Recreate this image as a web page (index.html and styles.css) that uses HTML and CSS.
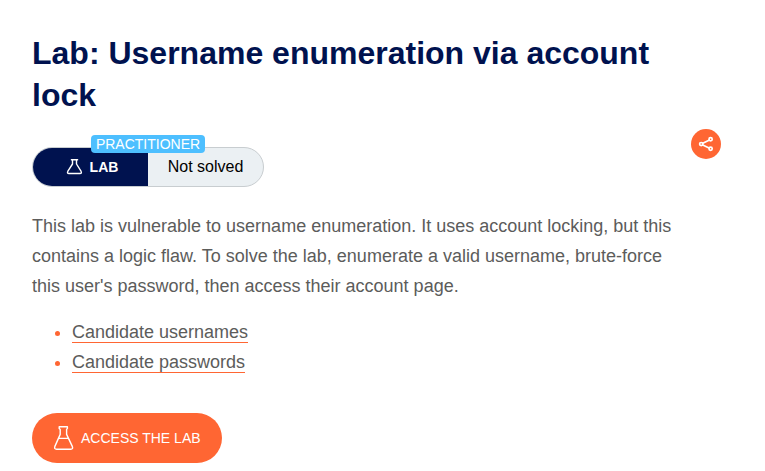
FILE: index.html
```html
<!DOCTYPE html>
<html lang="en">
<head>
<meta charset="utf-8">
<title>Lab: Username enumeration via account lock</title>
<link rel="stylesheet" href="styles.css">
</head>
<body>
<main class="page">
  <h1 class="title">Lab: Username enumeration via account lock</h1>
  <div class="status-row">
    <div class="lab-status">
      <span class="level">PRACTITIONER</span>
      <div class="lab-label">
        <svg class="flask-small" viewBox="0 0 16 16"><path d="M4.4 .8h6.2M5.5 1v4L.9 12.2Q-.3 14.5 2 14.5h10.9Q15.2 14.5 14 12.2L9.5 5V1"/></svg>
        <span>LAB</span>
      </div>
      <div class="lab-state">Not solved</div>
    </div>
    <button class="share" aria-label="Share">
      <svg class="share-icon" viewBox="0 0 30 30"><path d="M18 11.2L11.8 14.3M11.8 15.9l6.2 3"/><circle cx="19.6" cy="10.3" r="1.6"/><circle cx="10.2" cy="15.1" r="1.6"/><circle cx="19.6" cy="19.8" r="1.6"/></svg>
    </button>
  </div>
  <p class="description">This lab is vulnerable to username enumeration. It uses account locking, but this contains a logic flaw. To solve the lab, enumerate a valid username, brute-force this user's password, then access their account page.</p>
  <ul class="links">
    <li><a href="#">Candidate usernames</a></li>
    <li><a href="#">Candidate passwords</a></li>
  </ul>
  <a class="access" href="#">
    <svg class="flask-large" viewBox="0 0 20 24"><path d="M5.2.8h8.2v1.6L12.6 3.4v5L18.3 20.4Q19.3 23.2 16.8 23.2H2.5Q0 23.2 .9 20.4L6.2 8.4v-5L5.2 2.4zM4.6 12.4h9.5"/></svg>
    <span>ACCESS THE LAB</span>
  </a>
</main>
</body>
</html>
```
FILE: styles.css
```css
* { box-sizing: border-box; }
body { margin: 0; background: #fff; color: #5c5c5b; font-family: "Liberation Sans", Arial, sans-serif; }
.page { padding: 32px 44px 0 32px; }
.title { margin: 0; width: 650px; font-size: 32px; line-height: 42px; font-weight: 700; color: #00124f; }
.status-row { display: flex; justify-content: space-between; align-items: flex-start; margin-top: 13px; height: 58px; }
.lab-status { position: relative; display: flex; width: 232px; height: 40px; margin-top: 18px; border: 1px solid #c8cdd0; border-radius: 20px; background: #ebf0f3; }
.level { position: absolute; left: 58px; top: -13px; width: 114px; height: 18px; border-radius: 4px; background: #4dbfff; color: #fff; font-size: 14px; line-height: 18px; text-align: center; }
.lab-label { display: flex; align-items: center; justify-content: center; gap: 7px; width: 115px; border-radius: 19px 0 0 19px; background: #00124f; color: #fff; font-size: 14px; font-weight: 700; padding-left: 4px; }
.lab-state { flex: 1; color: #000; font-size: 16px; line-height: 38px; text-align: center; }
svg { display: block; fill: none; stroke: #fff; stroke-width: 1.4; stroke-linejoin: round; stroke-linecap: round; }
.flask-small { width: 16px; height: 16px; overflow: visible; }
.share { width: 30px; height: 30px; padding: 0; border: 0; border-radius: 50%; background: #ff6633; }
.share-icon { stroke-width: 1.7; }
.description { margin: 24px 0 0; width: 650px; font-size: 18px; line-height: 30px; }
.links { margin: 16px 0 0; padding-left: 40px; font-size: 18px; line-height: 30px; }
.links li::marker { color: #ff6633; }
.links a { color: #5c5c5b; text-decoration: none; border-bottom: 1px solid #ff6633; }
.access { display: flex; align-items: center; gap: 7px; width: 190px; height: 50px; margin-top: 36px; padding-left: 22px; border-radius: 25px; background: #ff6633; color: #fff; font-size: 14px; text-decoration: none; }
.flask-large { width: 20px; height: 24px; }
```
